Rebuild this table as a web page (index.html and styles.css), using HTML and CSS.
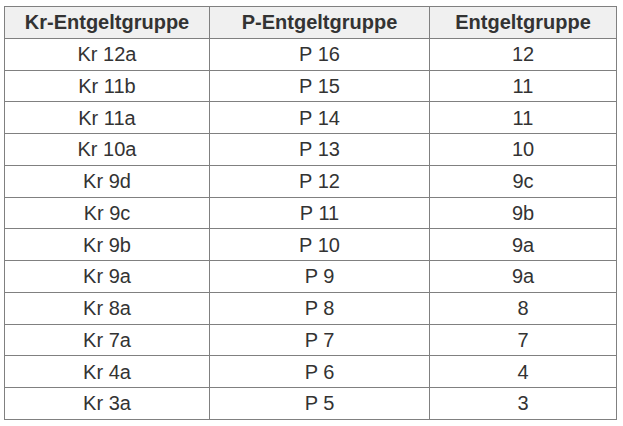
FILE: index.html
```html
<!DOCTYPE html>
<html>
<head>
<meta charset="utf-8">
<link rel="stylesheet" href="styles.css">
</head>
<body>
<table class="grades">
  <colgroup>
    <col class="c1">
    <col class="c2">
    <col class="c3">
  </colgroup>
  <thead>
    <tr><th>Kr-Entgeltgruppe</th><th>P-Entgeltgruppe</th><th>Entgeltgruppe</th></tr>
  </thead>
  <tbody>
    <tr><td>Kr 12a</td><td>P 16</td><td>12</td></tr>
    <tr><td>Kr 11b</td><td>P 15</td><td>11</td></tr>
    <tr><td>Kr 11a</td><td>P 14</td><td>11</td></tr>
    <tr><td>Kr 10a</td><td>P 13</td><td>10</td></tr>
    <tr><td>Kr 9d</td><td>P 12</td><td>9c</td></tr>
    <tr><td>Kr 9c</td><td>P 11</td><td>9b</td></tr>
    <tr><td>Kr 9b</td><td>P 10</td><td>9a</td></tr>
    <tr><td>Kr 9a</td><td>P 9</td><td>9a</td></tr>
    <tr><td>Kr 8a</td><td>P 8</td><td>8</td></tr>
    <tr><td>Kr 7a</td><td>P 7</td><td>7</td></tr>
    <tr><td>Kr 4a</td><td>P 6</td><td>4</td></tr>
    <tr><td>Kr 3a</td><td>P 5</td><td>3</td></tr>
  </tbody>
</table>
</body>
</html>
```

FILE: styles.css
```css
html, body {
  margin: 0;
  padding: 0;
  background: #ffffff;
}
body {
  font-family: "Liberation Sans", Arial, sans-serif;
  color: #333333;
}
.grades {
  border-collapse: collapse;
  margin: 6px 0 0 4px;
  width: 612px;
  table-layout: fixed;
  font-size: 20px;
}
.c1 { width: 205px; }
.c2 { width: 220px; }
.c3 { width: 187px; }
.grades tr {
  height: 31.75px;
}
.grades th,
.grades td {
  border: 1px solid #808080;
  padding: 0;
  text-align: center;
  vertical-align: middle;
  line-height: 22px;
}
.grades th {
  background: #f0f0f0;
  font-weight: bold;
  color: #333333;
}
```
